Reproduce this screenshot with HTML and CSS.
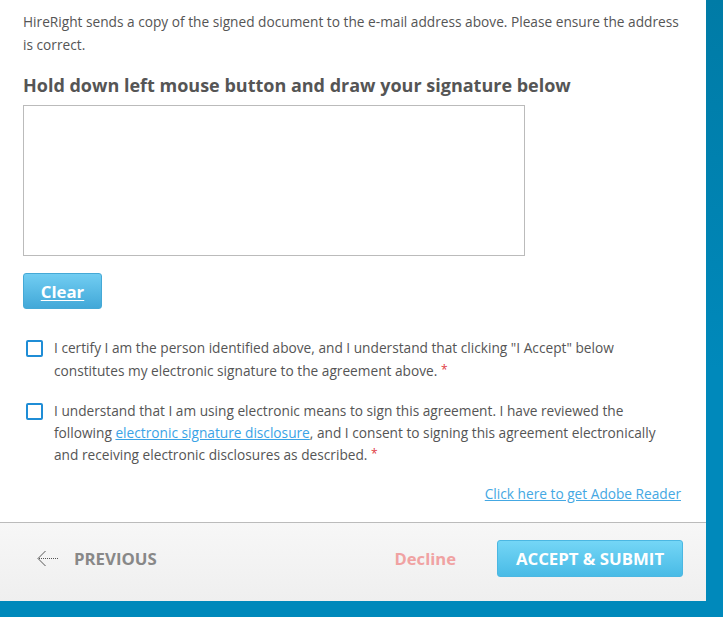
FILE: index.html
```html
<!DOCTYPE html>
<html lang="en">
<head>
<meta charset="utf-8">
<title>Signature</title>
<link rel="stylesheet" href="styles.css">
</head>
<body>
<div class="panel">
  <div class="content">
    <p class="note">HireRight sends a copy of the signed document to the e-mail address above. Please ensure the address is correct.</p>
    <h2 class="heading">Hold down left mouse button and draw your signature below</h2>
    <div class="sigbox"></div>
    <button class="clear" type="button">Clear</button>
    <label class="check">
      <span class="box"></span>
      <span class="ctext">I certify I am the person identified above, and I understand that clicking "I Accept" below constitutes my electronic signature to the agreement above. <span class="req">*</span></span>
    </label>
    <label class="check second">
      <span class="box"></span>
      <span class="ctext">I understand that I am using electronic means to sign this agreement. I have reviewed the following <a class="inlink" href="#">electronic signature disclosure</a>, and I consent to signing this agreement electronically and receiving electronic disclosures as described. <span class="req">*</span></span>
    </label>
    <div class="adobe"><a href="#">Click here to get Adobe Reader</a></div>
  </div>
  <div class="footer">
    <a class="prev" href="#">
      <svg class="arrow" width="22" height="17" viewBox="0 0 22 17">
        <polyline points="8.5,1 1,8.5 8.5,16" fill="none" stroke="#555" stroke-width="1"/>
        <line x1="2" y1="8.5" x2="21" y2="8.5" stroke="#555" stroke-width="1" stroke-dasharray="1 1"/>
      </svg>
      <span>PREVIOUS</span>
    </a>
    <div class="actions">
      <a class="decline" href="#">Decline</a>
      <button class="accept" type="button">ACCEPT &amp; SUBMIT</button>
    </div>
  </div>
</div>
</body>
</html>
```
FILE: styles.css
```css
html, body {
  margin: 0;
  padding: 0;
}
body {
  width: 723px;
  height: 617px;
  background: linear-gradient(#007ba6, #0089bb 60%, #0089bb);
  font-family: "Open Sans", "Noto Sans", sans-serif;
  color: #555;
  overflow: hidden;
}
.panel {
  width: 706px;
  height: 601px;
  background: #fff;
  display: flex;
  flex-direction: column;
}
.content {
  flex: 1;
  padding: 10px 25px 0 23px;
}
.note {
  margin: 0;
  font-size: 13.7px;
  line-height: 23px;
}
.heading {
  margin: 17px 0 0;
  font-size: 18px;
  line-height: 24px;
  font-weight: 700;
  color: #555;
}
.sigbox {
  margin-top: 8px;
  width: 500px;
  height: 149px;
  border: 1px solid #bbb;
}
.clear {
  display: block;
  margin-top: 17px;
  width: 79px;
  height: 36px;
  border: 1px solid #45a9d6;
  border-radius: 3px;
  background: linear-gradient(#71cdf2, #42a8d8);
  color: #fff;
  font-family: "Open Sans", sans-serif;
  font-weight: 700;
  font-size: 16.8px;
  text-decoration: underline;
  text-underline-offset: 2px;
  padding: 0;
}
.check {
  display: flex;
  align-items: flex-start;
  gap: 11px;
  margin-top: 28px;
  margin-left: 3px;
  font-size: 13.7px;
  line-height: 21.5px;
}
.check.second {
  margin-top: 19px;
}
.box {
  flex: none;
  width: 13px;
  height: 13px;
  border: 2px solid #1f8dd6;
  border-radius: 2px;
  margin-top: 3px;
}
.ctext {
  color: #555;
}
.req {
  color: #e0393e;
  font-size: 12px;
  vertical-align: 2px;
}
.inlink {
  color: #3aa3e6;
  text-decoration: underline;
}
.adobe {
  margin-top: 18px;
  text-align: right;
  font-size: 13.7px;
  line-height: 20px;
}
.adobe a {
  color: #44a8e3;
  text-decoration: underline;
}
.footer {
  border-top: 1px solid #bbb;
  background: linear-gradient(#f7f7f7, #efefef);
  display: flex;
  align-items: flex-start;
  justify-content: space-between;
  padding: 17px 23px 0 37px;
  box-sizing: border-box;
  height: 79px;
}
.prev {
  display: flex;
  align-items: center;
  gap: 15px;
  height: 37px;
  color: #888;
  font-weight: 700;
  font-size: 16.8px;
  text-decoration: none;
}
.arrow {
  display: block;
}
.actions {
  display: flex;
  align-items: center;
  gap: 41px;
}
.decline {
  color: #f0a2a2;
  font-weight: 700;
  font-size: 16.6px;
  text-decoration: none;
}
.accept {
  width: 186px;
  height: 37px;
  border: 1px solid #4bb7e2;
  border-radius: 3px;
  background: linear-gradient(#74d6f6, #49bbe6);
  color: #fff;
  font-family: "Open Sans", sans-serif;
  font-weight: 700;
  font-size: 16.8px;
  padding: 0;
}
```
